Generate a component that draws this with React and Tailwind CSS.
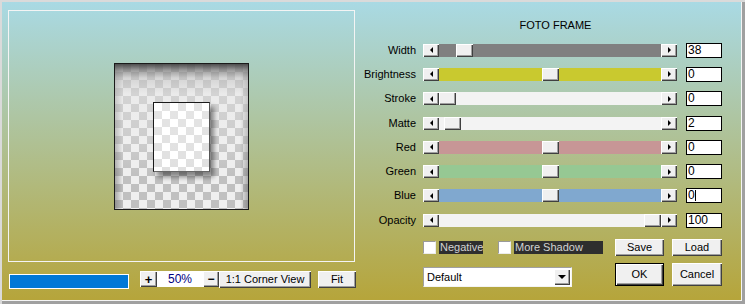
import React from 'react';

const raised =
  'bg-[#f0f0f0] shadow-[inset_1px_1px_0_#ffffff,inset_-1px_-1px_0_#404040,inset_-2px_-2px_0_#a0a0a0]';

const sliders = [
  { label: 'Width', value: '38', track: 'bg-[#808080]', thumb: 'ml-[17px]' },
  { label: 'Brightness', value: '0', track: 'bg-[#c9c92f]', thumb: 'ml-[103px]' },
  { label: 'Stroke', value: '0', track: 'bg-[#f3f3f3]', thumb: 'ml-0' },
  { label: 'Matte', value: '2', track: 'bg-[#f3f3f3]', thumb: 'ml-[5px]' },
  { label: 'Red', value: '0', track: 'bg-[#c79696]', thumb: 'ml-[103px]' },
  { label: 'Green', value: '0', track: 'bg-[#96c893]', thumb: 'ml-[103px]' },
  { label: 'Blue', value: '0', track: 'bg-[#80a8cf]', thumb: 'ml-[103px]', caret: true },
  { label: 'Opacity', value: '100', track: 'bg-[#f3f3f3]', thumb: 'ml-[205px]' },
];

function Preview() {
  return (
    <div className="w-[135px] h-[147px] border border-[#1a1a1a] bg-[image:linear-gradient(180deg,rgba(70,70,70,0.95)_0px,rgba(125,125,125,0.75)_6px,rgba(195,195,195,0.6)_14px,rgba(230,230,230,0.5)_30px,rgba(240,240,240,0.25)_55%,rgba(255,255,255,0)_78%),linear-gradient(90deg,rgba(100,100,100,0.5),rgba(0,0,0,0)_6%,rgba(0,0,0,0)_94%,rgba(100,100,100,0.5)),conic-gradient(#c0c0c0_25%,#efefef_0_50%,#c0c0c0_0_75%,#efefef_0)] bg-[length:100%_100%,100%_100%,16px_16px]">
      <div className="mt-[38px] ml-[38px] w-[57px] h-[70px] border border-[#1a1a1a] border-r-[#555] border-b-[#666] shadow-[4px_5px_5px_rgba(0,0,0,0.45)] bg-[image:linear-gradient(180deg,rgba(255,255,255,0.15),rgba(255,255,255,0)),conic-gradient(#e0e0e0_25%,#ffffff_0_50%,#e0e0e0_0_75%,#ffffff_0)] bg-[length:100%_100%,16px_16px]" />
    </div>
  );
}

function Arrow({ dir }) {
  return (
    <div className={`w-[16px] h-[13px] flex items-center justify-center ${raised}`}>
      {dir === 'left' ? (
        <div className="w-0 h-0 border-y-[3px] border-y-transparent border-r-[3px] border-r-black" />
      ) : (
        <div className="w-0 h-0 border-y-[3px] border-y-transparent border-l-[3px] border-l-black" />
      )}
    </div>
  );
}

function SliderRow({ s }) {
  return (
    <div className="h-[24.3px] flex items-center">
      <div className="w-[56px] text-right text-[11px] leading-[13px] text-black">{s.label}</div>
      <div className="ml-[7px] flex w-[254px] h-[13px]">
        <Arrow dir="left" />
        <div className={`flex-1 flex ${s.track}`}>
          <div className={`w-[17px] h-[13px] ${raised} ${s.thumb}`} />
        </div>
        <Arrow dir="right" />
      </div>
      <div className="ml-[9px] w-[36px] h-[15px] border border-black bg-white text-[12px] leading-[13px] pl-[1px] flex items-center text-black">
        {s.value}
        {s.caret && <span className="w-px h-[11px] bg-black" />}
      </div>
    </div>
  );
}

function Checkbox({ label, width }) {
  return (
    <>
      <div className="w-[13px] h-[13px] bg-white border border-t-[#9a9a9a] border-l-[#9a9a9a] border-r-[#ececec] border-b-[#ececec]" />
      <div className={`ml-[3px] h-[13px] bg-[#2e2e2e] text-[#d2d2d2] text-[11px] leading-[13px] pl-[1px] ${width}`}>
        {label}
      </div>
    </>
  );
}

export default function App() {
  return (
    <div className="w-[745px] h-[304px] flex overflow-hidden font-['Liberation_Sans',Arial,sans-serif] bg-[linear-gradient(180deg,#a9dae5,#b6a438)] shadow-[inset_2px_2px_0_#dadada,inset_-3px_-3px_0_#a0a0a0,inset_-4px_-4px_0_#f4f4f4]">
      {/* preview side */}
      <div className="w-[360px] pl-[8px] pt-[10px] flex flex-col">
        <div className="w-[347px] h-[252px] border border-[#f4f4f4] flex items-center justify-center">
          <Preview />
        </div>
        <div className="mt-[9px] flex items-start">
          <div className="ml-[1px] mt-[3px] w-[120px] h-[15px] border border-white bg-[#0078d7]" />
          <div className={`ml-[11px] w-[17px] h-[16px] flex items-center justify-center text-[13px] font-bold leading-none text-black ${raised}`}>
            +
          </div>
          <div className="w-[46px] h-[16px] bg-white text-[#000080] text-[12px] leading-[16px] text-center">
            50%
          </div>
          <div className={`w-[16px] h-[16px] flex items-center justify-center text-[12px] font-bold leading-none text-black ${raised}`}>
            −
          </div>
          <div className={`w-[92px] h-[17px] text-[11px] leading-[17px] text-center text-black ${raised}`}>
            1:1 Corner View
          </div>
          <div className={`ml-[7px] w-[38px] h-[17px] text-[11px] leading-[17px] text-center text-black ${raised}`}>
            Fit
          </div>
        </div>
      </div>

      {/* controls side */}
      <div className="flex-1 flex flex-col">
        <div className="mt-[19px] h-[13px] leading-[13px] text-[11px] text-center pl-[6px] text-black">
          FOTO FRAME
        </div>
        <div className="mt-[6px] flex flex-col">
          {sliders.map((s) => (
            <SliderRow key={s.label} s={s} />
          ))}
        </div>

        <div className="mt-[7px] h-[17px] flex items-center pl-[63px]">
          <Checkbox label="Negative" width="w-[44px]" />
          <div className="ml-[15px] flex items-center">
            <Checkbox label="More Shadow" width="w-[89px]" />
          </div>
          <div className={`ml-[12px] w-[49px] h-[17px] text-[11px] leading-[17px] text-center text-black ${raised}`}>
            Save
          </div>
          <div className={`ml-[8px] w-[50px] h-[17px] text-[11px] leading-[17px] text-center text-black ${raised}`}>
            Load
          </div>
        </div>

        <div className="mt-[7px] flex items-start pl-[63px]">
          <div className="mt-[4px] w-[149px] h-[20px] bg-white border border-t-[#a0a0a0] border-l-[#a0a0a0] border-r-[#f4f4f4] border-b-[#f4f4f4] flex items-center">
            <span className="pl-[3px] text-[11px] leading-[13px] text-black">Default</span>
            <div className={`ml-auto mr-[1px] w-[16px] h-[16px] flex items-center justify-center ${raised}`}>
              <div className="w-0 h-0 border-x-[4px] border-x-transparent border-t-[4px] border-t-black" />
            </div>
          </div>
          <div className="ml-[43px] w-[49px] h-[23px] border border-black">
            <div className={`w-full h-full text-[11px] leading-[21px] text-center text-black ${raised}`}>OK</div>
          </div>
          <div className={`ml-[8px] w-[50px] h-[23px] text-[11px] leading-[23px] text-center text-black ${raised}`}>
            Cancel
          </div>
        </div>
      </div>
    </div>
  );
}
